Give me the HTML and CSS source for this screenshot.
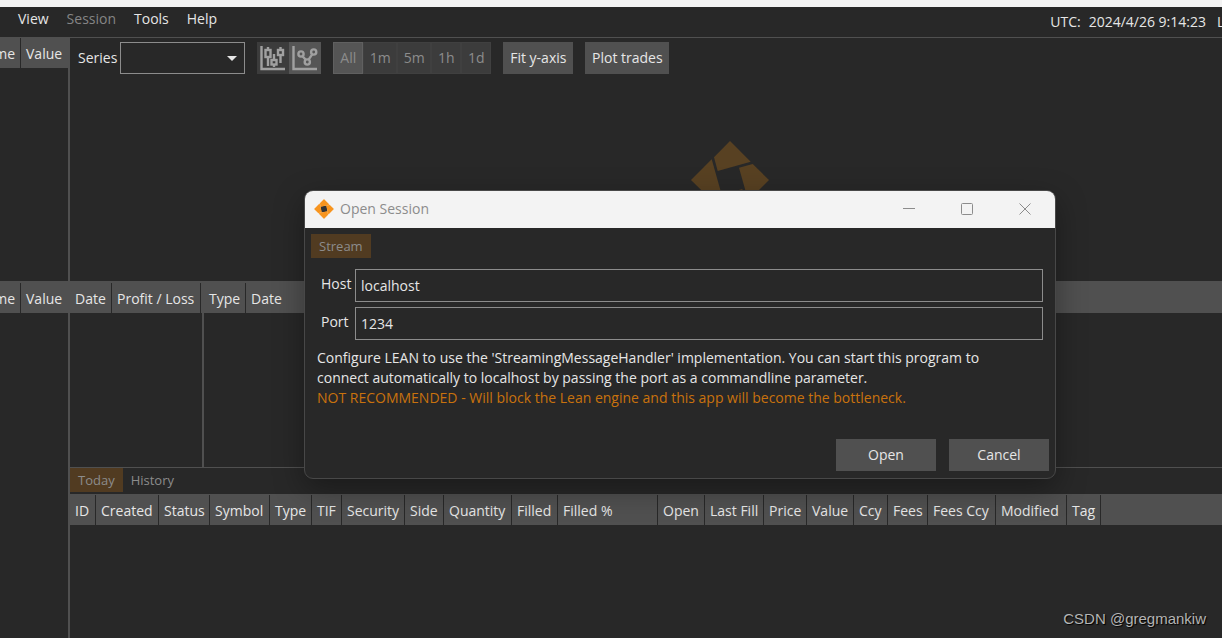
FILE: index.html
```html
<!DOCTYPE html>
<html lang="en">
<head>
<meta charset="utf-8">
<title>Open Session</title>
<link rel="stylesheet" href="styles.css">
</head>
<body>
<svg class="defs" aria-hidden="true">
  <symbol id="logo" viewBox="-40 -40 80 80">
    <path id="blade" d="M0-39 20.7-18.3-12.3-9-16-22.7z"/>
    <use href="#blade" transform="rotate(90)"/>
    <use href="#blade" transform="rotate(180)"/>
    <use href="#blade" transform="rotate(270)"/>
  </symbol>
</svg>
<div class="app">
  <header class="menubar">
    <nav class="menu">
      <span class="menu-cut"><button type="button">File</button></span>
      <button type="button">View</button>
      <button type="button" disabled>Session</button>
      <button type="button">Tools</button>
      <button type="button">Help</button>
    </nav>
    <div class="clock"><span>UTC:</span><span>2024/4/26 9:14:23</span></div>
    <div class="clock-local">Local:</div>
  </header>

  <main class="workspace">
    <section class="panel stats">
      <div class="head head-short"><table class="side"><thead><tr><th><span>Name</span></th><th>Value</th></tr></thead></table></div>
      <div class="body split"></div>
    </section>

    <section class="panel chart">
      <div class="toolbar">
        <div class="series">
          <label for="series">Series</label>
          <span class="combo"><select id="series"><option></option></select></span>
        </div>
        <div class="group">
          <button type="button" class="icon" aria-label="Candles">
            <svg viewBox="0 0 32 32"><path class="axis" d="M4.500 4V27H28"/><path d="M11 5V8M11 15V24M17 12V18M17 22.500V25M23.500 5V8M23.500 13V21"/><rect x="8.500" y="8" width="5" height="7"/><rect x="14.500" y="18" width="5" height="4.500"/><rect x="21" y="8" width="5" height="5"/></svg>
          </button>
          <button type="button" class="icon on" aria-label="Line">
            <svg viewBox="0 0 32 32"><path class="axis" d="M4.500 4V27H28"/><path d="M13.500 14.200 16.800 17.800M19.600 17.600 23.200 12.400"/><circle cx="12" cy="12" r="2.600"/><circle cx="18.300" cy="20" r="2.600"/><circle cx="24.700" cy="10" r="2.600"/></svg>
          </button>
        </div>
        <div class="group ranges">
          <button type="button" class="on">All</button>
          <button type="button">1m</button>
          <button type="button">5m</button>
          <button type="button">1h</button>
          <button type="button">1d</button>
        </div>
        <button type="button" class="action">Fit y-axis</button>
        <button type="button" class="action trades">Plot trades</button>
      </div>
      <svg class="mark" aria-hidden="true"><use href="#logo"/></svg>
    </section>

    <section class="panel params">
      <div class="head"><table class="side"><thead><tr><th><span>Name</span></th><th>Value</th></tr></thead></table></div>
      <div class="body split"></div>
    </section>

    <section class="middle">
      <div class="panel profit">
        <div class="head"><table class="pl"><thead><tr><th>Date</th><th>Profit / Loss</th></tr></thead></table></div>
        <div class="body split"></div>
      </div>
      <div class="panel log">
        <div class="head"><table class="events"><thead><tr><th>Type</th><th>Date</th></tr></thead></table></div>
        <div class="body"></div>
      </div>
    </section>

    <section class="panel orders">
      <div class="tabs">
        <button type="button" class="tab current">Today</button>
        <button type="button" class="tab">History</button>
      </div>
      <div class="head head-orders"><table class="trade"><thead><tr>
        <th>ID</th><th>Created</th><th>Status</th><th>Symbol</th><th>Type</th><th>TIF</th><th>Security</th><th>Side</th><th>Quantity</th><th>Filled</th><th>Filled %</th><th>Open</th><th>Last Fill</th><th>Price</th><th>Value</th><th>Ccy</th><th>Fees</th><th>Fees Ccy</th><th>Modified</th><th>Tag</th>
      </tr></thead></table></div>
      <div class="body"></div>
    </section>
  </main>

  <form class="dialog" role="dialog" aria-labelledby="dlg-title">
    <div class="titlebar">
      <svg class="badge" viewBox="-40 -40 80 80" aria-hidden="true"><path class="base" d="M0-39 39 0 0 39-39 0z"/><path class="core" d="M-13-10 10-13 13 10-10 13z"/><use href="#logo" x="-40" y="-40" width="80" height="80"/></svg>
      <h1 id="dlg-title">Open Session</h1>
      <div class="window-buttons">
        <button type="button" aria-label="Minimize"><svg viewBox="0 0 12 12"><path d="M0 5.500H12"/></svg></button>
        <button type="button" aria-label="Maximize"><svg viewBox="0 0 12 12"><rect x=".5" y=".5" width="11" height="11" rx="1"/></svg></button>
        <button type="button" aria-label="Close"><svg viewBox="0 0 12 12"><path d="M.5.5l11 11M11.500.5l-11 11"/></svg></button>
      </div>
    </div>
    <div class="content">
      <button type="button" class="tab current">Stream</button>
      <div class="fields">
        <label for="host">Host</label><input id="host" type="text" value="localhost">
        <label for="port">Port</label><input id="port" type="text" value="1234">
      </div>
      <p class="note">Configure LEAN to use the 'StreamingMessageHandler' implementation. You can start this program to<br>connect automatically to localhost by passing the port as a commandline parameter.<br><span class="warn">NOT RECOMMENDED - Will block the Lean engine and this app will become the bottleneck.</span></p>
      <div class="actions">
        <button type="button">Open</button>
        <button type="button">Cancel</button>
      </div>
    </div>
  </form>
  <div class="credit">CSDN @gregmankiw</div>
</div>
</body>
</html>
```
FILE: styles.css
```css
* { box-sizing: border-box; }

body {
  margin: 0;
  background: #282828;
  color: #e6e6e6;
  font: 14px/20px "Open Sans", "Noto Sans", sans-serif;
}

button, input, select {
  margin: 0;
  padding: 0;
  border: 0;
  border-radius: 0;
  background: none;
  color: inherit;
  font: inherit;
}

svg { display: block; }
.defs { position: absolute; width: 0; height: 0; }

.app {
  position: relative;
  display: flex;
  flex-direction: column;
  min-height: 100vh;
  overflow: hidden;
  border-top: 7px solid #f3f3f3;
}

/* Menu bar */
.menubar {
  display: flex;
  align-items: flex-start;
  height: 31px;
  padding-top: 2px;
  border-bottom: 1px solid #505050;
}
.menu { display: flex; gap: 18px; }
.menu button:disabled { color: #858585; }
.menu-cut { display: flex; justify-content: flex-end; width: 0; overflow: hidden; }
.clock { display: flex; gap: 8px; margin: 3px 11px 0 auto; }
.clock-local { width: 5px; margin-top: 3px; overflow: hidden; }

/* Workspace */
.workspace {
  flex: 1;
  display: grid;
  grid-template-columns: 70px minmax(0, 1fr);
  grid-template-rows: 243fr 186fr 171fr;
}
.panel { display: flex; flex-direction: column; min-width: 0; }
.params { grid-row: 2 / 4; grid-column: 1; }
.middle { display: grid; grid-template-columns: 134px minmax(0, 1fr); }
.orders { border-top: 1px solid #505050; }
.body { flex: 1; }
.split { border-right: 2px solid #505050; }

.head { height: 32px; padding-top: 2px; background: #505050; overflow: hidden; }
.head-short { height: 30px; padding-top: 0; }
.head-orders { height: 31px; padding-top: 1px; margin-top: 2px; }
table { table-layout: fixed; border-collapse: separate; border-spacing: 0; height: 100%; }
th {
  padding: 2px 0 0 5px;
  border-right: 1px solid #282828;
  font-weight: 400;
  text-align: left;
  white-space: nowrap;
}
.side { width: 70px; }
.side th:first-child { width: 21px; padding: 2px 5px 0 0; overflow: hidden; }
.side th:first-child span { display: flex; justify-content: flex-end; }
.side th:last-child, .events th:last-child { border-right: 0; }
.pl { width: 131px; }
.pl th:first-child { width: 42px; }
.events { width: 120px; }
.events th:first-child { width: 42px; }

.trade { width: 1031px; }
.trade th:nth-child(1) { width: 26px; }
.trade th:nth-child(2) { width: 63px; }
.trade th:nth-child(3) { width: 51px; }
.trade th:nth-child(4) { width: 60px; }
.trade th:nth-child(5) { width: 42px; }
.trade th:nth-child(6) { width: 30px; }
.trade th:nth-child(7) { width: 63px; }
.trade th:nth-child(8) { width: 39px; }
.trade th:nth-child(9) { width: 68px; }
.trade th:nth-child(10) { width: 46px; }
.trade th:nth-child(11) { width: 100px; }
.trade th:nth-child(12) { width: 47px; }
.trade th:nth-child(13) { width: 59px; }
.trade th:nth-child(14) { width: 43px; }
.trade th:nth-child(15) { width: 47px; }
.trade th:nth-child(16) { width: 34px; }
.trade th:nth-child(17) { width: 40px; }
.trade th:nth-child(18) { width: 68px; }
.trade th:nth-child(19) { width: 71px; }
.trade th:nth-child(20) { width: 34px; }

/* Chart toolbar */
.chart { position: relative; }
.toolbar { display: flex; gap: 12px; padding: 4px 8px; }
.toolbar button { height: 32px; }
.series { display: flex; align-items: center; gap: 3px; }
.combo { position: relative; }
.combo select {
  display: block;
  width: 125px;
  height: 32px;
  border: 1px solid #8c8c8c;
  appearance: none;
}
.combo::after {
  content: "";
  position: absolute;
  right: 8px;
  top: 14px;
  border: 5px solid transparent;
  border-top-color: #e6e6e6;
  border-bottom: 0;
}
.group { display: flex; }
.group button { background: #3c3c3c; }
.group .on { background: #555; }
.icon { width: 32px; }
.icon svg { width: 32px; height: 32px; fill: none; stroke: #a0a0a0; stroke-width: 2.4; }
.ranges button { width: 34px; border: 1px solid #404040; color: #8c8c8c; }
.ranges .on { border-color: #606060; }
.ranges button:first-child, .ranges button:last-child { width: 30px; }
.ranges button:nth-child(4) { width: 30px; }
.action { width: 70px; background: #505050; white-space: nowrap; }
.trades { width: 84px; }
.mark {
  position: absolute;
  left: 620px;
  top: 102px;
  width: 80px;
  height: 80px;
  fill: #584122;
}

/* Tabs */
.tabs { display: flex; }
.tab { height: 24px; padding: 0 8px; color: #8c8c8c; font-size: 13px; }
.tab.current { background: #513b21; }

/* Dialog */
.dialog {
  position: absolute;
  left: 304px;
  right: 166px;
  top: 183px;
  overflow: hidden;
  border: 1px solid #484848;
  border-radius: 9px;
  background: #282828;
  box-shadow: 0 10px 30px rgba(0, 0, 0, .35);
}
.titlebar {
  display: flex;
  align-items: center;
  height: 37px;
  padding: 0 1px 1px 9px;
  background: #f3f3f3;
  color: #8c8c8c;
}
.badge { width: 20px; height: 20px; fill: #f7941e; }
.badge .base { fill: #fbb25a; }
.badge .core { fill: #333; }
.titlebar h1 { margin: 0 auto 0 6px; font-size: 14px; font-weight: 400; }
.window-buttons { display: flex; height: 100%; }
.window-buttons button { display: grid; place-items: center; width: 58px; }
.window-buttons svg { width: 12px; height: 12px; fill: none; stroke: #8c8c8c; }
.content { padding: 6px 6px 7px; }
.content .tab { display: block; }
.fields {
  display: grid;
  grid-template-columns: 34px minmax(0, 1fr);
  gap: 5px 0;
  padding: 11px 6px 0 10px;
}
.fields label { padding-top: 5px; }
.fields input {
  width: 100%;
  height: 33px;
  padding: 0 5px;
  border: 1px solid #8c8c8c;
}
.note { margin: 8px 6px 0; white-space: nowrap; }
.warn { color: #c8720d; }
.actions { display: flex; justify-content: flex-end; gap: 13px; margin-top: 31px; }
.actions button { width: 100px; height: 32px; background: #505050; }

.credit {
  position: absolute;
  right: 16px;
  bottom: 9px;
  color: #b4b4b4;
  font: 15px/20px "Liberation Sans", Arial, sans-serif;
  text-shadow: 1px 1px 1px #000;
}
```
